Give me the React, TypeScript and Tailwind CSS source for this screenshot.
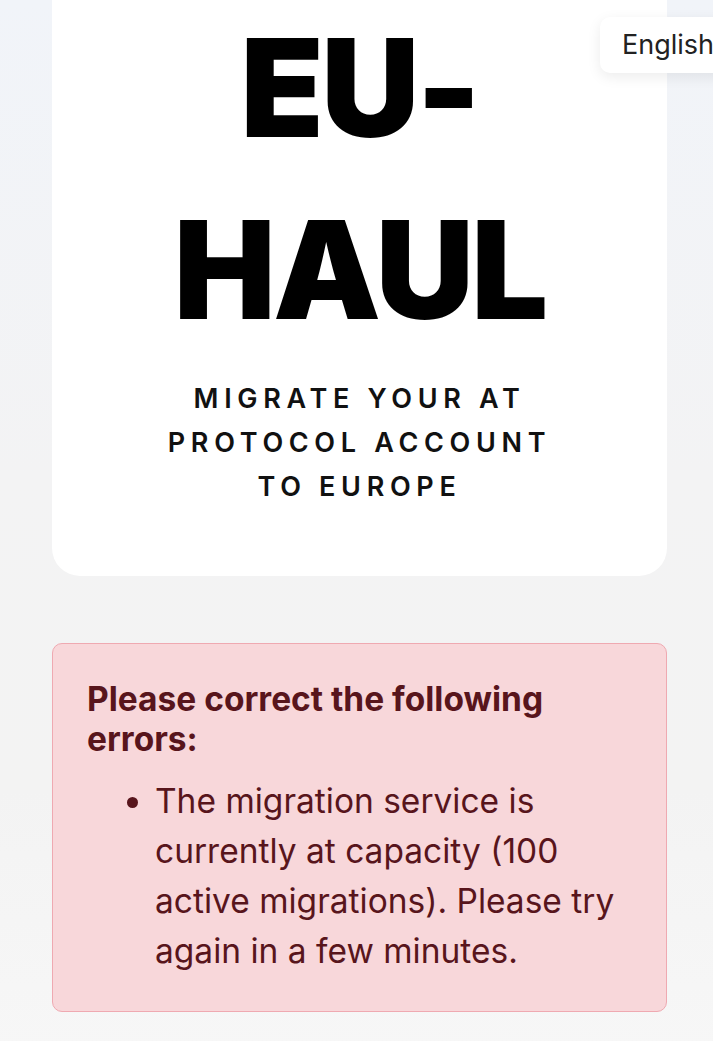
import React from "react";

export default function App() {
  return (
    <div
      className="relative min-h-screen overflow-hidden bg-[linear-gradient(180deg,#f1f4f9_0%,#f3f3f4_45%,#f3f3f3_75%,#f7f7f7_100%)] text-black"
      style={{ fontFamily: "Inter, 'Noto Sans', sans-serif" }}
    >
      <div className="pl-[52px] pr-[46px] pb-[40px]">
        {/* hero card */}
        <div className="mt-[-55px] rounded-[28px] bg-white px-[96px] pt-[52px] pb-[67px] text-center">
          <h1 className="text-[136px] font-black leading-[182px] tracking-[-0.02em] text-black">EU-HAUL</h1>
          <p className="mt-[16px] text-[27px] font-semibold uppercase leading-[44px] tracking-[0.21em] text-[#111]">
            Migrate your AT Protocol account to Europe
          </p>
        </div>

        {/* error alert */}
        <div className="mt-[67px] rounded-[10px] border border-[#efa9b1] bg-[#f8d7da] px-[34px] pt-[35px] pb-[35px] text-[#58151c]">
          <h2 className="text-[33.5px] font-bold leading-[40px]">Please correct the following errors:</h2>
          <ul className="mt-[17px] list-disc pl-[68px] text-[33.5px] leading-[50px]">
            <li>
              The migration service is currently at capacity (100 active migrations). Please try again in a few
              minutes.
            </li>
          </ul>
        </div>
      </div>

      {/* language switcher */}
      <button className="absolute left-[600px] top-[17px] h-[56px] whitespace-nowrap rounded-[10px] bg-white pl-[22px] pr-[40px] text-left text-[27px] text-[#222] shadow-[0_4px_14px_rgba(0,0,0,0.08)]">
        English
      </button>
    </div>
  );
}
